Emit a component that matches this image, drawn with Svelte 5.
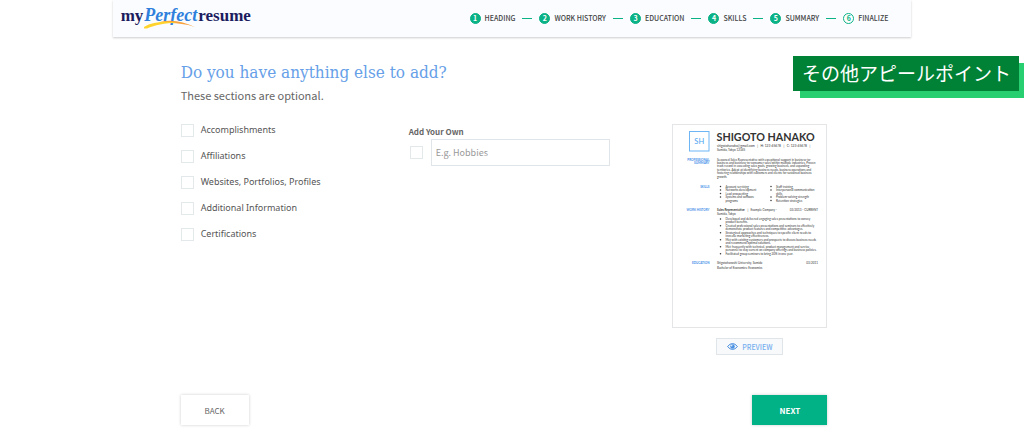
<script>
  const steps = ['Heading', 'Work History', 'Education', 'Skills', 'Summary', 'Finalize'];
  const current = 6;
  const sections = [
    'Accomplishments',
    'Affiliations',
    'Websites, Portfolios, Profiles',
    'Additional Information',
    'Certifications'
  ];

  // Resume miniature: page units are a quarter of a CSS pixel at full width.
  const lines = [
    [176, 102, 'Sumida, Tokyo 12345'],
    [176, 142, 'Seasoned Sales Representative with exceptional support in business-to-'],
    [176, 156, 'business and business-to-consumer sales within multiple industries. Proven'],
    [176, 169, 'track record in exceeding sales goals, growing business, and expanding'],
    [176, 182, 'territories. Adept at identifying business needs, business operations and'],
    [176, 195, 'fostering relationships with customers and clients for sustained business'],
    [176, 211, 'growth.'],
    [210, 250, 'Account servicing'],
    [210, 264, 'Networks development'],
    [210, 278, 'Lead prospecting'],
    [210, 292, 'Systems and software'],
    [210, 306, 'programs'],
    [412, 250, 'Staff training'],
    [412, 264, 'Interpersonal communication'],
    [412, 278, 'skills'],
    [412, 292, 'Problem-solving strength'],
    [412, 306, 'Retention strategies'],
    [292, 345, '  |   Example Company -'],
    [176, 359, 'Sumida, Tokyo'],
    [210, 380, 'Developed and delivered engaging sales presentations to convey'],
    [210, 393, 'product benefits.'],
    [210, 407, 'Created professional sales presentations and seminars to effectively'],
    [210, 421, 'demonstrate product features and competitive advantages.'],
    [210, 435, 'Strategized approaches and techniques to specific client needs to'],
    [210, 448, 'increase marketing effectiveness.'],
    [210, 463, 'Met with existing customers and prospects to discuss business needs'],
    [210, 477, 'and recommend optimal solutions.'],
    [210, 491, 'Met frequently with technical, product management and service'],
    [210, 505, 'personnel to stay current on company offerings and business policies.'],
    [210, 519, 'Facilitated group seminars to bring 20% in one year.'],
    [176, 557, 'Shigotohanoshi University, Sumida'],
    [176, 577, 'Bachelor of Economics: Economics']
  ];
  const labels = [
    [142, 'PROFESSIONAL'],
    [156, 'SUMMARY'],
    [250, 'SKILLS'],
    [345, 'WORK HISTORY'],
    [557, 'EDUCATION']
  ];
  const dots = [
    [190, 246], [190, 260], [190, 274], [190, 288],
    [392, 246], [392, 260], [392, 288], [392, 302],
    [190, 376], [190, 403], [190, 431], [190, 459], [190, 487], [190, 515]
  ];
</script>

<div class="page">
  <header>
    <a class="logo" href="#home" aria-label="myPerfectresume">
      <span>my</span><em>Perfect</em><span>resume</span>
      <svg class="swoosh" viewBox="0 0 52 9" aria-hidden="true">
        <path d="M16 2 C28 -1 40 2 51 7 C38 3 28 2.500 16 3.500 Z" fill="#f8a13c" />
        <path d="M0 7 C8 2 20 1 34 2.500 C20 3 11 5 3 8.500 Q-1 9 0 7 Z" fill="#ffd32e" />
      </svg>
    </a>
    <ol class="steps">
      {#each steps as step, i}
        <li aria-current={i + 1 === current ? 'step' : undefined}>
          <span class="num" class:open={i + 1 === current}>{i + 1}</span>
          <span>{step}</span>
        </li>
      {/each}
    </ol>
  </header>

  <main>
    <h1>Do you have anything else to add?</h1>
    <p class="sub">These sections are optional.</p>

    <div class="columns">
      <div class="options">
        {#each sections as section}
          <label><input type="checkbox" /><span>{section}</span></label>
        {/each}
      </div>

      <div class="own">
        <label class="own-title" for="own">Add Your Own</label>
        <div class="own-row">
          <input type="checkbox" aria-label="Include your own section" />
          <input id="own" type="text" placeholder="E.g. Hobbies" />
        </div>
      </div>

      <aside>
        <svg class="sheet" viewBox="0 0 612 808" role="img" aria-label="Resume">
          <rect x="66" y="26" width="78" height="78" fill="none" stroke="#6db5f5" stroke-width="4" />
          <text class="mono" x="105" y="76" text-anchor="middle">SH</text>
          <text class="name" x="174" y="64">SHIGOTO HANAKO</text>
          <text class="contact" x="176" y="86">shigotohanako@gmail.com   |   H: 123-45678   |   C: 123-45678   |</text>
          {#each labels as [y, text]}
            <text class="tag" x="146" {y} text-anchor="end">{text}</text>
          {/each}
          {#each lines as [x, y, text]}
            <text {x} {y}>{text}</text>
          {/each}
          <text class="strong" x="176" y="345">Sales Representative</text>
          <text x="580" y="345" text-anchor="end">03/2013 - CURRENT</text>
          <text x="580" y="557" text-anchor="end">03/2011</text>
          {#each dots as [cx, cy]}
            <circle {cx} {cy} r="3" />
          {/each}
        </svg>
        <button class="preview" type="button">
          <svg viewBox="0 0 22 14" aria-hidden="true">
            <path d="M1 7 Q11 -5 21 7 Q11 19 1 7Z" fill="none" stroke="#4a90e2" stroke-width="2" />
            <circle cx="11" cy="7" r="4.500" fill="#4a90e2" />
            <circle cx="9.500" cy="5.500" r="1.500" fill="#fff" />
          </svg>
          PREVIEW
        </button>
      </aside>
    </div>

    <div class="actions">
      <button class="back" type="button">BACK</button>
      <button class="next" type="button">NEXT</button>
    </div>
  </main>

  <div class="banner">その他アピールポイント</div>
</div>

<style>
  :global(body) {
    background: #fff;
  }
  .page {
    position: relative;
    overflow: hidden;
    padding-bottom: 21px;
    font-family: 'Noto Sans CJK JP', sans-serif;
    color: #666;
  }
  header {
    display: flex;
    justify-content: space-between;
    align-items: flex-start;
    box-sizing: border-box;
    width: 78%;
    margin: 0 auto;
    padding: 1px 23px 7px 8px;
    background: #fafcff;
    box-shadow: 0 1px 2px #ccc;
  }
  .logo {
    position: relative;
    display: flex;
    align-items: baseline;
    gap: 1px;
    font: bold 17px/28px 'Liberation Serif', serif;
    color: #1c1c5e;
    text-decoration: none;
  }
  .logo em {
    font-size: 18px;
    color: #2f80dc;
  }
  .swoosh {
    position: absolute;
    left: 23px;
    top: 19px;
    width: 52px;
  }
  .steps {
    display: flex;
    gap: 7px;
    margin: 0;
    padding: 11px 0 0;
    list-style: none;
    font-size: 7px;
    font-weight: 500;
    line-height: 12px;
    text-transform: uppercase;
    color: #444;
  }
  li {
    display: flex;
    align-items: center;
    gap: 4px;
  }
  li:not(:last-child)::after {
    content: '';
    width: 10px;
    height: 1px;
    margin-left: 3px;
    background: #0ab286;
  }
  .num {
    box-sizing: border-box;
    width: 11px;
    height: 11px;
    border: 1px solid #0ab286;
    border-radius: 50%;
    background: #0ab286;
    color: #fff;
    font-weight: 700;
    line-height: 9px;
    text-align: center;
  }
  .num.open {
    background: #fff;
    color: #0ab286;
  }
  main {
    box-sizing: border-box;
    width: 78%;
    margin: 0 auto;
    padding: 23px 84px 0 68px;
  }
  h1 {
    margin: 0;
    font: 400 17px/24px 'DejaVu Serif Condensed', 'DejaVu Serif', serif;
    color: #66a0e8;
  }
  .sub {
    margin: 0;
    font-size: 11px;
    line-height: 22px;
  }
  .columns {
    display: flex;
    align-items: flex-start;
    margin-top: 16px;
  }
  .options {
    display: flex;
    flex-direction: column;
    gap: 10px;
    flex: 0 0 228px;
    font: 9px/16px 'Noto Sans', sans-serif;
    color: #555;
  }
  .options label {
    display: flex;
    align-items: center;
    gap: 7px;
  }
  input[type='checkbox'] {
    appearance: none;
    box-sizing: border-box;
    flex: none;
    width: 13px;
    height: 13px;
    margin: 0;
    border: 1px solid #e3e8ea;
    background: #fff;
  }
  input[type='checkbox']:checked {
    background: #0ab286;
  }
  .own {
    flex: 0 0 201px;
    padding-top: 2px;
  }
  .own-title {
    display: block;
    font-size: 8px;
    font-weight: 700;
    line-height: 15px;
  }
  .own-row {
    display: flex;
    align-items: center;
    gap: 8px;
    padding-left: 1px;
  }
  input[type='text'] {
    box-sizing: border-box;
    flex: 1;
    min-width: 0;
    height: 27px;
    padding: 0 4px;
    border: 1px solid #dfe5e8;
    font: 9px 'Noto Sans CJK JP', sans-serif;
    color: #666;
  }
  input::placeholder {
    color: #999;
  }
  aside {
    display: flex;
    flex-direction: column;
    align-items: center;
    gap: 10px;
    width: 155px;
    margin-left: auto;
    padding-top: 2px;
  }
  .sheet {
    box-sizing: border-box;
    width: 100%;
    border: 1px solid #e3e5e6;
    font: 12px Lato, sans-serif;
    fill: #333;
  }
  .sheet text {
    white-space: pre;
  }
  .contact {
    font-size: 13px;
  }
  .name {
    font-size: 43px;
    font-weight: 700;
  }
  .mono {
    font-size: 30px;
    fill: #4aa3f0;
  }
  .tag {
    font-weight: 700;
    fill: #3f8ee8;
  }
  .strong {
    font-weight: 700;
  }
  button {
    display: flex;
    align-items: center;
    justify-content: center;
    font: 500 8px 'Noto Sans CJK JP', sans-serif;
    color: #666;
    cursor: pointer;
  }
  .preview {
    gap: 4px;
    height: 17px;
    padding: 0 10px;
    border: 1px solid #dfe5e8;
    background: #f7f9fa;
    font-size: 7px;
    color: #78b0f0;
  }
  .preview svg {
    width: 11px;
  }
  .actions {
    display: flex;
    justify-content: space-between;
    margin-top: 40px;
  }
  .back,
  .next {
    height: 30px;
    border: 0;
    background: #fff;
    box-shadow: 0 0 3px #ccc;
  }
  .back {
    width: 68px;
    font-weight: 400;
  }
  .next {
    width: 75px;
    background: #02b287;
    color: #fff;
    font-weight: 700;
  }
  .banner {
    position: absolute;
    top: 56px;
    right: 5px;
    padding: 0 8px 2px 9px;
    background: #008236;
    box-shadow: 7px 7px #28cf70;
    font-size: 19px;
    line-height: 33px;
    color: #fff;
  }
</style>
